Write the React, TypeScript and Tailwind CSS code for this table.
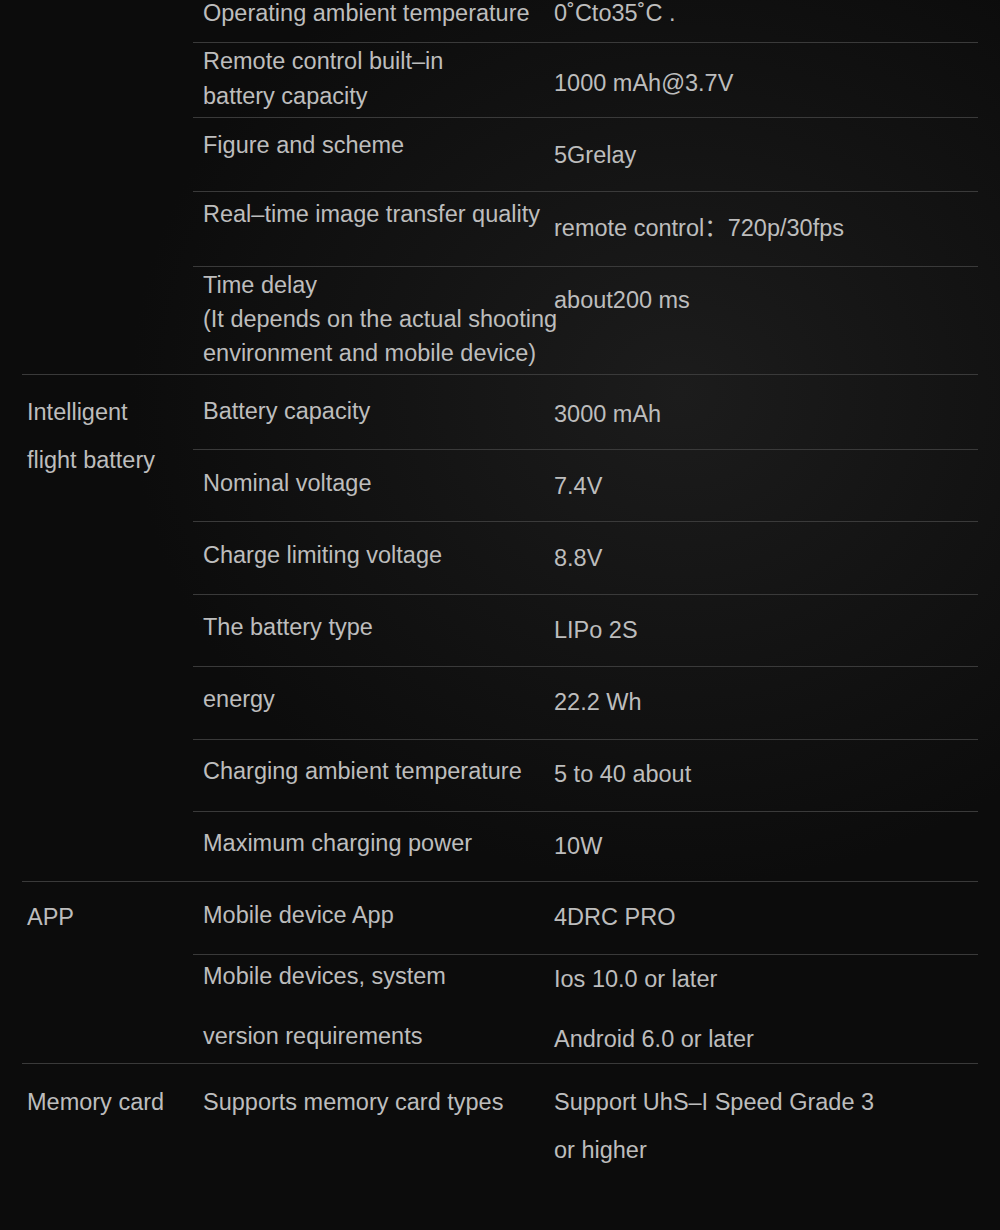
import React from "react";

type RowProps = {
  h: string;
  border?: boolean;
  lp: string;
  vp: string;
  label: React.ReactNode;
  value: React.ReactNode;
  ll?: string;
  vl?: string;
};

function Row({ h, border = true, lp, vp, label, value, ll = "leading-[35px]", vl = "leading-[35px]" }: RowProps) {
  return (
    <div className={`flex ${h} ${border ? "border-t border-[#3a3a3a]" : ""}`}>
      <div className={`w-[361px] shrink-0 pl-[10px] ${lp} ${ll} whitespace-nowrap`}>{label}</div>
      <div className={`flex-1 ${vp} ${vl} whitespace-nowrap`}>{value}</div>
    </div>
  );
}

export default function App() {
  return (
    <div
      className="w-[1000px] h-[1230px] overflow-hidden bg-[#0f0f0f] bg-[radial-gradient(ellipse_55%_40%_at_68%_32%,#1c1c1c_0%,#131313_55%,#0c0c0c_100%)] text-[#bdbdbd] text-[23.5px] font-['Liberation_Sans','Noto_Sans_CJK_SC',sans-serif] antialiased"
    >
      <div className="ml-[22px] w-[956px]">
        {/* Group 1 */}
        <div className="flex">
          <div className="w-[171px] shrink-0" />
          <div className="flex-1">
            <Row
              h="h-[42px]"
              border={false}
              lp="pt-0"
              vp="pt-0"
              ll="leading-[26px]"
              vl="leading-[26px]"
              label="Operating ambient temperature"
              value="0˚Cto35˚C ."
            />
            <Row
              h="h-[75px]"
              lp="pt-[1px]"
              vp="pt-[23px]"
              label={
                <>
                  <div>Remote control built–in</div>
                  <div>battery capacity</div>
                </>
              }
              value="1000 mAh@3.7V"
            />
            <Row h="h-[74px]" lp="pt-[10px]" vp="pt-[20px]" label="Figure and scheme" value="5Grelay" />
            <Row
              h="h-[75px]"
              lp="pt-[5px]"
              vp="pt-[19px]"
              label="Real–time image transfer quality"
              value="remote control：720p/30fps"
            />
            <Row
              h="h-[108px]"
              lp="pt-[1px]"
              vp="pt-[16px]"
              ll="leading-[34px]"
              label={
                <>
                  <div>Time delay</div>
                  <div>(It depends on the actual shooting</div>
                  <div>environment and mobile device)</div>
                </>
              }
              value="about200 ms"
            />
          </div>
        </div>

        {/* Group 2 */}
        <div className="flex border-t border-[#3a3a3a]">
          <div className="w-[171px] shrink-0 pl-[5px] pt-[13px] leading-[48px] whitespace-nowrap">
            <div>Intelligent</div>
            <div>flight battery</div>
          </div>
          <div className="flex-1">
            <Row h="h-[74px]" border={false} lp="pt-[19px]" vp="pt-[22px]" label="Battery capacity" value="3000 mAh" />
            <Row h="h-[72px]" lp="pt-[16px]" vp="pt-[19px]" label="Nominal voltage" value="7.4V" />
            <Row h="h-[73px]" lp="pt-[16px]" vp="pt-[19px]" label="Charge limiting voltage" value="8.8V" />
            <Row h="h-[72px]" lp="pt-[15px]" vp="pt-[18px]" label="The battery type" value="LIPo 2S" />
            <Row h="h-[73px]" lp="pt-[15px]" vp="pt-[18px]" label="energy" value="22.2 Wh" />
            <Row h="h-[72px]" lp="pt-[14px]" vp="pt-[17px]" label="Charging ambient temperature" value="5 to 40 about" />
            <Row h="h-[70px]" lp="pt-[14px]" vp="pt-[17px]" label="Maximum charging power" value="10W" />
          </div>
        </div>

        {/* Group 3 */}
        <div className="flex border-t border-[#3a3a3a]">
          <div className="w-[171px] shrink-0 pl-[5px] pt-[18px] leading-[35px]">APP</div>
          <div className="flex-1">
            <Row h="h-[72px]" border={false} lp="pt-[16px]" vp="pt-[18px]" label="Mobile device App" value="4DRC PRO" />
            <Row
              h="h-[109px]"
              lp="pt-[4px]"
              vp="pt-[7px]"
              label={
                <>
                  <div>Mobile devices, system</div>
                  <div className="mt-[25px]">version requirements</div>
                </>
              }
              value={
                <>
                  <div>Ios 10.0 or later</div>
                  <div className="mt-[25px]">Android 6.0 or later</div>
                </>
              }
            />
          </div>
        </div>

        {/* Group 4 */}
        <div className="flex border-t border-[#3a3a3a]">
          <div className="w-[171px] shrink-0 pl-[5px] pt-[21px] leading-[35px] whitespace-nowrap">Memory card</div>
          <div className="flex-1">
            <Row
              h="h-[166px]"
              border={false}
              lp="pt-[21px]"
              vp="pt-[14px]"
              vl="leading-[48px]"
              label="Supports memory card types"
              value={
                <>
                  <div>Support UhS–I Speed Grade 3</div>
                  <div>or higher</div>
                </>
              }
            />
          </div>
        </div>
      </div>
    </div>
  );
}
